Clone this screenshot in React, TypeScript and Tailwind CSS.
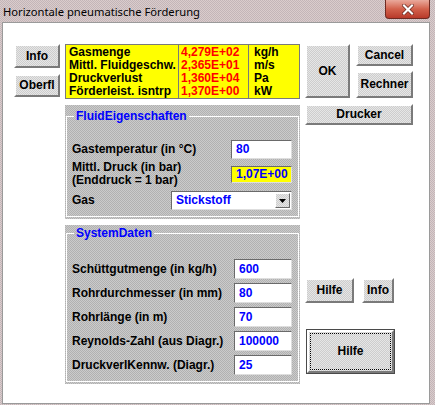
import React from "react";

const font = "font-['Liberation_Sans',Arial,sans-serif] font-bold text-[12px] leading-[13px]";
const btnBg =
  "bg-[repeating-conic-gradient(#e6e6e6_0_25%,#cdcdcd_0_50%)] bg-[length:2px_2px]";
const panelBg =
  "bg-[repeating-conic-gradient(#cbcbcb_0_25%,#b1b1b1_0_50%)] bg-[length:2px_2px]";

function Btn({ label, className = "" }: { label: string; className?: string }) {
  return (
    <div
      className={`${btnBg} ${font} flex items-center justify-center text-black border-2 border-t-white border-l-white border-b-[#7a7a7a] border-r-[#7a7a7a] ${className}`}
    >
      {label}
    </div>
  );
}

function Field({ value, className = "", yellow = false }: { value: string; className?: string; yellow?: boolean }) {
  return (
    <div
      className={`${font} flex items-center pl-[4px] text-[#0000ff] border border-t-[#6a6a6a] border-l-[#6a6a6a] border-b-[#dedede] border-r-[#dedede] ${
        yellow ? "bg-[#ffff00]" : "bg-white"
      } ${className}`}
    >
      {value}
    </div>
  );
}

const results = [
  ["Gasmenge", "4,279E+02", "kg/h"],
  ["Mittl. Fluidgeschw.", "2,365E+01", "m/s"],
  ["Druckverlust", "1,360E+04", "Pa"],
  ["Förderleist. isntrp", "1,370E+00", "kW"],
];

const systemRows = [
  ["Schüttgutmenge (in kg/h)", "600"],
  ["Rohrdurchmesser (in mm)", "80"],
  ["Rohrlänge (in m)", "70"],
  ["Reynolds-Zahl (aus Diagr.)", "100000"],
  ["DruckverlKennw. (Diagr.)", "25"],
];

export default function App() {
  return (
    <div className="w-[435px] h-[405px] bg-[repeating-conic-gradient(#dacccc_0_25%,#c3b5b8_0_50%)] bg-[length:2px_2px] overflow-hidden">
      {/* title bar */}
      <div className="h-[22px] flex items-start justify-between">
        <span className="pl-[3px] pt-[4px] font-['Noto_Sans',sans-serif] text-[11.2px] leading-[15px] text-black">
          Horizontale pneumatische Förderung
        </span>
        <div className="mr-[5px] w-[45px] h-[19px] rounded-b-[4px] border border-t-0 border-[#6e2a22] bg-gradient-to-b from-[#e9a99c] via-[#d2614c] to-[#b8392a] flex items-center justify-center">
          <svg width="12" height="11" viewBox="0 0 12 11">
            <path d="M2 1.5 L10 9.5 M10 1.5 L2 9.5" stroke="#5a1a12" strokeWidth="3.4" strokeLinecap="square" />
            <path d="M2 1.5 L10 9.5 M10 1.5 L2 9.5" stroke="white" strokeWidth="2.2" strokeLinecap="square" />
          </svg>
        </div>
      </div>

      {/* client area */}
      <div className="ml-[2px] w-[428px] h-[382px] bg-white border border-[#9a9a9a] pt-[21px] pl-[11px] flex">
        {/* left buttons */}
        <div className="w-[46px] flex flex-col gap-[6px]">
          <Btn label="Info" className="h-[24px]" />
          <Btn label="Oberfl" className="h-[23px]" />
        </div>

        {/* middle column */}
        <div className="ml-[5px] w-[235px] flex flex-col">
          <div className={`${font} h-[55px] bg-[#ffff00] border border-[#7a7a7a] flex`}>
            <div className="w-[113px] pl-[3px] pt-[1px] border-r border-[#7a7a7a]">
              {results.map((r) => (
                <div key={r[0]} className="h-[13px] text-black">{r[0]}</div>
              ))}
            </div>
            <div className="w-[70px] pl-[2px] pt-[1px] border-r border-[#7a7a7a]">
              {results.map((r) => (
                <div key={r[1]} className="h-[13px] text-[#ff0000]">{r[1]}</div>
              ))}
            </div>
            <div className="flex-1 pl-[5px] pt-[1px]">
              {results.map((r) => (
                <div key={r[2]} className="h-[13px] text-black">{r[2]}</div>
              ))}
            </div>
          </div>

          {/* FluidEigenschaften */}
          <div className={`${panelBg} mt-[6px] h-[114px] pt-[4px] px-[1px] pb-[2px]`}>
            <fieldset className="h-full border border-white pl-[5px] pr-[6px]">
              <legend className={`${font} text-[#0000ff] ml-[2px] px-[2px] leading-[14px]`}>FluidEigenschaften</legend>
              <div className={`${font} mt-[17px] flex items-center justify-between`}>
                <span>Gastemperatur (in °C)</span>
                <Field value="80" className="w-[61px] h-[19px]" />
              </div>
              <div className={`${font} mt-[2px] h-[26px] flex items-center justify-between`}>
                <div className="flex flex-col">
                  <span className="leading-[13px]">Mittl. Druck (in bar)</span>
                  <span className="leading-[13px]">(Enddruck = 1 bar)</span>
                </div>
                <Field value="1,07E+00" yellow className="w-[61px] h-[17px]" />
              </div>
              <div className={`${font} mt-[4px] flex items-center justify-between`}>
                <span>Gas</span>
                <div className="w-[121px] h-[19px] bg-white border border-t-[#6a6a6a] border-l-[#6a6a6a] border-b-[#dedede] border-r-[#dedede] flex items-center">
                  <span className="flex-1 pl-[4px] text-[#0000ff]">Stickstoff</span>
                  <div className={`${btnBg} w-[15px] h-[15px] mr-[1px] border border-t-white border-l-white border-b-[#6a6a6a] border-r-[#6a6a6a] flex items-center justify-center`}>
                    <svg width="7" height="4" viewBox="0 0 7 4">
                      <path d="M0 0 H7 L3.5 4 Z" fill="black" />
                    </svg>
                  </div>
                </div>
              </div>
            </fieldset>
          </div>

          {/* SystemDaten */}
          <div className={`${panelBg} mt-[6px] h-[159px] pt-[1px] px-[1px] pb-[2px]`}>
            <fieldset className="h-full border border-white pl-[5px] pr-[6px]">
              <legend className={`${font} text-[#0000ff] ml-[2px] px-[2px] leading-[14px]`}>SystemDaten</legend>
              <div className="mt-[19px] flex flex-col gap-[4px]">
                {systemRows.map(([label, value]) => (
                  <div key={label} className={`${font} flex items-center justify-between`}>
                    <span>{label}</span>
                    <Field value={value} className="w-[58px] h-[20px]" />
                  </div>
                ))}
              </div>
            </fieldset>
          </div>
        </div>

        {/* right column */}
        <div className="ml-[5px] w-[108px] flex flex-col">
          <div className="flex gap-[6px]">
            <Btn label="OK" className="w-[45px] h-[54px]" />
            <div className="w-[57px] flex flex-col gap-[5px]">
              <Btn label="Cancel" className="h-[22px]" />
              <Btn label="Rechner" className="h-[27px]" />
            </div>
          </div>
          <Btn label="Drucker" className="mt-[6px] h-[21px]" />

          <div className="mt-[153px] flex gap-[8px]">
            <Btn label="Hilfe" className="w-[49px] h-[25px]" />
            <Btn label="Info" className="w-[32px] h-[25px]" />
          </div>

          <div className="mt-[26px] ml-[1px] w-[89px] h-[45px] border border-[#4a4a4a]">
            <div className={`${btnBg} h-full border-2 border-t-white border-l-white border-b-[#7a7a7a] border-r-[#7a7a7a] p-[1px]`}>
              <div className={`${font} h-full border border-dotted border-black flex items-center justify-center`}>
                Hilfe
              </div>
            </div>
          </div>
        </div>
      </div>
    </div>
  );
}
